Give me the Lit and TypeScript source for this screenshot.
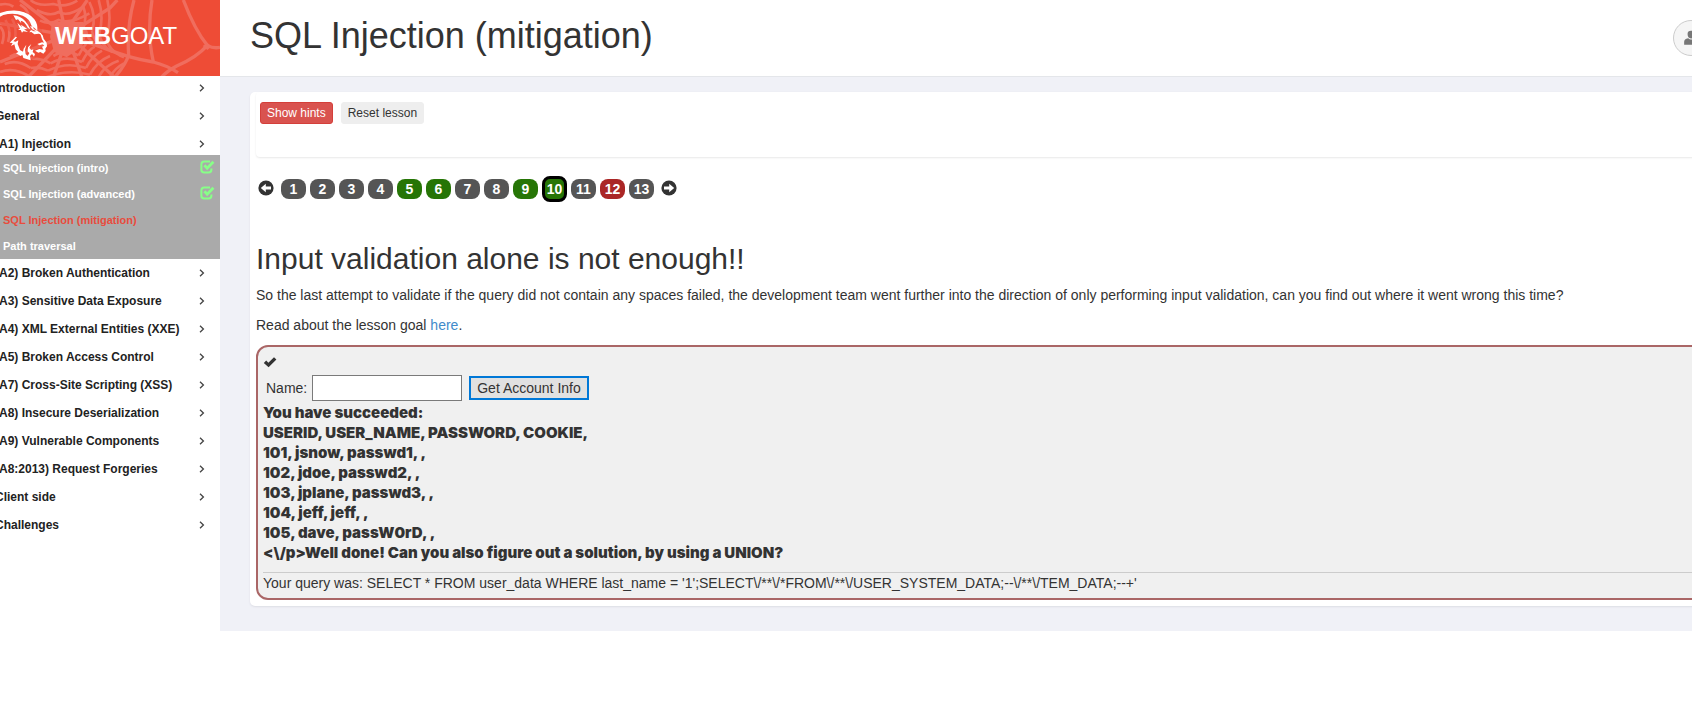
import { LitElement, html, css, svg } from "lit";
import { customElement } from "lit/decorators.js";
import { classMap } from "lit/directives/class-map.js";

interface Lesson {
  name: string;
  solved?: boolean;
  current?: boolean;
}
interface Category {
  name: string;
  lessons?: Lesson[];
}

const CATEGORIES: Category[] = [
  { name: "Introduction" },
  { name: "General" },
  {
    name: "(A1) Injection",
    lessons: [
      { name: "SQL Injection (intro)", solved: true },
      { name: "SQL Injection (advanced)", solved: true },
      { name: "SQL Injection (mitigation)", current: true },
      { name: "Path traversal" },
    ],
  },
  { name: "(A2) Broken Authentication" },
  { name: "(A3) Sensitive Data Exposure" },
  { name: "(A4) XML External Entities (XXE)" },
  { name: "(A5) Broken Access Control" },
  { name: "(A7) Cross-Site Scripting (XSS)" },
  { name: "(A8) Insecure Deserialization" },
  { name: "(A9) Vulnerable Components" },
  { name: "(A8:2013) Request Forgeries" },
  { name: "Client side" },
  { name: "Challenges" },
];

const OUTPUT = [
  "You have succeeded:",
  "USERID, USER_NAME, PASSWORD, COOKIE,",
  "101, jsnow, passwd1, ,",
  "102, jdoe, passwd2, ,",
  "103, jplane, passwd3, ,",
  "104, jeff, jeff, ,",
  "105, dave, passW0rD, ,",
  "<\\/p>Well done! Can you also figure out a solution, by using a UNION?",
];

const QUERY =
  "SELECT * FROM user_data WHERE last_name = '1';SELECT\\/**\\/*FROM\\/**\\/USER_SYSTEM_DATA;--\\/**\\/TEM_DATA;--+'";

/* Spider web rings, drawn as sagging threads between the strands. */
const webRings = [
  "M60 14Q96 34 84 78",
  "M92 0Q112 20 160 12Q196 24 232 2",
  "M110 30Q150 52 176 36Q204 52 250 20",
  "M120 62Q150 76 176 60Q210 74 268 40",
  "M250 20Q262 52 250 82",
  "M268 6Q290 48 276 92",
  "M296 0Q312 52 298 98",
  "M322 0Q336 60 320 112",
  "M258 92Q262 116 280 128",
  "M276 92Q280 124 306 140",
  "M298 98Q300 136 338 156",
  "M320 112Q322 150 372 172",
  "M160 168Q196 146 236 166",
  "M152 190Q198 164 246 186",
  "M144 212Q200 184 258 204",
  "M138 232Q204 206 270 224",
  "M236 166Q250 140 262 128",
  "M246 186Q262 152 284 140",
  "M258 204Q276 168 306 152",
  "M270 224Q290 184 330 168",
  "M296 232Q312 196 356 182",
  "M330 232Q342 206 372 190",
  "M30 170Q60 150 96 176",
  "M14 192Q52 176 92 204",
  "M0 216Q44 200 88 230",
  "M96 176Q128 176 152 190",
  "M92 204Q120 200 144 212",
  "M0 14Q24 8 40 20",
  "M0 80Q18 96 6 132",
  "M16 60Q36 88 24 126",
  "M36 56Q52 84 44 118",
];
const webStrands = [
  "M196 96L176 0",
  "M196 96L262 0",
  "M190 100L60 0",
  "M190 104L0 70",
  "M190 110L0 186",
  "M196 116L84 232",
  "M200 116L160 232",
  "M206 116L246 232",
  "M212 112L344 232",
  "M210 100L330 24L352 0",
  "M206 108L300 140Q390 176 460 186Q500 196 534 218",
  "M402 0Q380 80 386 166Q376 196 344 232",
  "M456 0Q440 96 460 186",
  "M550 0Q584 90 622 136Q640 146 660 142",
  "M622 136Q590 172 530 198Q500 214 484 232",
];

@customElement("app-root")
export class AppRoot extends LitElement {
  static styles = css`
    :host {
      display: block;
      overflow: hidden;
      background: #fff;
      color: #333;
      font: 14px/20px "Liberation Sans", Arial, sans-serif;
    }
    * {
      box-sizing: border-box;
    }
    button,
    input {
      font: inherit;
      color: inherit;
      margin: 0;
    }
    h1,
    h2,
    p,
    ul,
    ol {
      margin: 0;
      padding: 0;
      list-style: none;
    }
    /* The shell runs past both edges of the window. */
    .shell {
      display: grid;
      grid-template-columns: 240px minmax(0, 1fr);
      align-items: start;
      margin: 0 -36px 0 -20px;
    }
    .brand {
      position: relative;
      display: flex;
      align-items: center;
      height: 76px;
      padding: 0 0 4px 75px;
      background: #ee4c36;
      color: #fff;
      font-size: 24px;
      line-height: 28px;
      text-decoration: none;
      overflow: hidden;
    }
    .brand-art {
      position: absolute;
      inset: 0 0 0 20px;
      width: 220px;
      height: 76px;
    }
    .brand-name {
      position: relative;
    }
    .menu-link {
      display: flex;
      align-items: center;
      justify-content: space-between;
      height: 28px;
      padding: 0 15px 4px;
      color: #222;
      font-size: 12px;
      font-weight: 700;
      text-decoration: none;
      white-space: nowrap;
    }
    .submenu {
      margin: -5px 0 2px;
      background: #aaa;
    }
    .sub-link {
      display: flex;
      align-items: center;
      justify-content: space-between;
      height: 26px;
      padding: 0 5px 0 23px;
      color: #fff;
      font-size: 11px;
      font-weight: 700;
      text-decoration: none;
    }
    .sub-link svg {
      margin-bottom: 3px;
    }
    .sub-link.current {
      color: #e84c3d;
    }
    .top {
      display: flex;
      align-items: center;
      justify-content: space-between;
      height: 77px;
      padding: 0 19px 5px 30px;
      border-bottom: 1px solid #e4e6ea;
    }
    h1 {
      font-size: 36px;
      line-height: 40px;
      font-weight: 400;
    }
    .user {
      display: grid;
      place-items: center;
      width: 36px;
      height: 36px;
      margin-top: 5px;
      padding: 0;
      border: 1px solid #ccc;
      border-radius: 50%;
      background: #f5f5f5;
    }
    .content {
      padding: 15px 0 25px 30px;
      background: #f0f1f7;
    }
    .card {
      padding: 0 0 6px 6px;
      border-radius: 5px;
      background: #fff;
      box-shadow: 0 1px 2px #dcdde4;
    }
    .tools {
      display: flex;
      align-items: flex-start;
      gap: 8px;
      height: 65px;
      padding: 10px 4px;
      border-radius: 4px;
      box-shadow: 0 1px 2px #e8e8e8;
    }
    .small {
      height: 22px;
      padding: 0 6px;
      border: 1px solid #eee;
      border-radius: 3px;
      background: #eee;
      font-size: 12px;
      line-height: 18px;
    }
    .small.danger {
      border-color: #d43f3a;
      background: #d9534f;
      color: #fff;
    }
    .pages {
      display: flex;
      align-items: center;
      gap: 4px;
      padding: 19px 2px 40px;
    }
    .arrow {
      display: flex;
      padding: 0 0 3px;
      border: 0;
      background: none;
    }
    .pages li:first-child {
      margin-right: 3px;
    }
    .pages li:last-child {
      margin-left: 3px;
    }
    .page {
      display: block;
      width: 25px;
      height: 20px;
      border-radius: 8px;
      background: #555;
      color: #fff;
      font-weight: 700;
      text-align: center;
      text-decoration: none;
    }
    .page.solved {
      background: #267506;
    }
    .page.failed {
      background: #aa2626;
    }
    .page.current {
      height: 26px;
      border: 3px solid #000;
    }
    h2 {
      margin-bottom: 10px;
      font-size: 30px;
      line-height: 33px;
      font-weight: 400;
    }
    .text {
      margin-bottom: 10px;
    }
    .text a {
      color: #428bca;
      text-decoration: none;
    }
    .attack {
      padding: 5px;
      border: 2px solid #a66;
      border-radius: 12px;
      background: #f0f0f0;
    }
    .mark {
      display: block;
      margin: 3px 0 4px;
    }
    .form {
      display: flex;
      align-items: center;
      padding: 2px 3px;
    }
    .form label {
      margin-right: 5px;
    }
    .form input {
      width: 150px;
      height: 26px;
      margin-right: 7px;
      padding: 1px 4px;
      border: 1px solid #7a7a7a;
      background: #fff;
    }
    .form button {
      height: 24px;
      padding: 0 6px;
      border: 2px solid #0078d7;
      background: #e1e1e1;
    }
    .output {
      padding-bottom: 9px;
      border-bottom: 1px solid #ccc;
      font-family: Inter, "Liberation Sans", sans-serif;
      font-size: 15px;
      font-weight: 900;
    }
  `;

  private art() {
    return html`<svg class="brand-art" viewBox="0 0 660 228" aria-hidden="true">
      <g fill="none" stroke="#f06d5e" stroke-width="8">
        ${webRings.map((d) => svg`<path d=${d} />`)}
        <g stroke-width="10">${webStrands.map((d) => svg`<path d=${d} />`)}</g>
      </g>
      <path fill="#f06d5e" d="M156 66L250 66L262 96L246 140L200 172L162 156L150 110Z" />
      <path fill="#f06d5e" d="M608 138L622 128L634 140L622 150Z" />
      <path fill="#ee4c36" opacity=".4" d="M0 40Q50 20 92 42Q124 64 126 92L142 130L132 160L92 182L30 150L40 104L0 70Z" />
      <g fill="#fff">
        <path d="M0 39Q30 29 58 33Q88 38 103 58Q114 73 112 92L104 84Q97 84 94 76Q89 56 68 47Q48 39 24 42Q8 44 0 50Z" />
        <path d="M40 46Q61 47 76 64Q86 76 91 88L84 84Q72 62 62 62L64 70L54 58L48 60Z" />
        <path d="M52 68L66 82L63 74L82 87L72 88L84 96L70 94L66 98L62 90L54 90L60 86Z" />
        <path d="M90 78L98 80L102 88L112 92L122 99L126 104L116 101L103 103L94 96L88 97L93 90L101 94L108 94L97 88Z" />
        <path d="M120 99L128 106L131 116L140 128L141 139L136 146L137 153L130 161L121 156L115 158L105 152L118 147L130 149L126 140L133 137L128 133L118 136L112 132L126 127L132 128L126 118L123 108Z" />
        <path d="M47 110L29 128L38 129L33 138L43 133L47 148L55 156L48 160L62 168L67 164L70 174L92 181L90 168L96 162L102 170L105 162L98 156L100 148L94 150L88 144L94 132L84 142L83 154L88 159L83 168L77 163L75 150L79 134L71 146L69 155L60 150L53 132L55 121L47 125L40 124L51 112Z" />
      </g>
    </svg>`;
  }

  private circleArrow(flip: boolean) {
    return html`<svg width="16" height="16" viewBox="0 0 16 16" aria-hidden="true">
      <g transform=${flip ? "translate(16 0) scale(-1 1)" : ""}>
        <circle cx="8" cy="8" r="7.6" fill="#333" />
        <path fill="#fff" d="M2.8 8L7.8 3.8V6.5H13V9.5H7.8V12.2Z" />
      </g>
    </svg>`;
  }

  private solvedIcon() {
    return html`<svg width="15" height="14" viewBox="0 0 15 14" role="img" aria-label="solved">
      <path fill="none" stroke="#8f8" stroke-width="2" d="M10 1.6H4.2Q1.4 1.6 1.4 4.4V9.8Q1.4 12.6 4.2 12.6H8.6Q11.4 12.6 11.4 9.8V8.6" />
      <path fill="none" stroke="#8f8" stroke-width="2.8" d="M4.4 5.2L7.2 8.2L13.4 1.8" />
    </svg>`;
  }

  private menuItem(c: Category) {
    return html`<li>
      <a class="menu-link" href="#">
        <span>${c.name}</span>
        <svg width="6" height="8" viewBox="0 0 6 8" aria-hidden="true">
          <path fill="none" stroke="#444" stroke-width="1.3" d="M1 .8L4.4 4L1 7.2" />
        </svg>
      </a>
      ${c.lessons
        ? html`<ul class="submenu">
            ${c.lessons.map(
              (l) => html`<li>
                <a class=${classMap({ "sub-link": true, current: !!l.current })} href="#">
                  <span>${l.name}</span>${l.solved ? this.solvedIcon() : ""}
                </a>
              </li>`
            )}
          </ul>`
        : ""}
    </li>`;
  }

  private pageLink(n: number) {
    const cls = {
      page: true,
      solved: [5, 6, 9, 10].includes(n),
      failed: n === 12,
      current: n === 10,
    };
    return html`<li><a class=${classMap(cls)} href="#">${n}</a></li>`;
  }

  render() {
    const pages = Array.from({ length: 13 }, (_, i) => i + 1);
    return html`<div class="shell">
      <aside>
        <a class="brand" href="#">${this.art()}<span class="brand-name"><b>WEB</b>GOAT</span></a>
        <nav><ul>${CATEGORIES.map((c) => this.menuItem(c))}</ul></nav>
      </aside>
      <div>
        <header class="top">
          <h1>SQL Injection (mitigation)</h1>
          <button class="user" aria-label="User">
            <svg width="16" height="16" viewBox="0 0 14 14" aria-hidden="true">
              <path fill="#777" d="M4 3.4Q4 .6 7 .6T10 3.4Q10 7 7 7.4Q4 7 4 3.4ZM1 13V10.4Q1 8 3.6 7.4L4.6 7.2Q7 9.6 9.4 7.2L10.4 7.4Q13 8 13 10.4V13Z" />
            </svg>
          </button>
        </header>
        <main class="content">
          <div class="card">
            <div class="tools">
              <button class="small danger">Show hints</button>
              <button class="small">Reset lesson</button>
            </div>
            <ol class="pages">
              <li><button class="arrow" aria-label="Previous page">${this.circleArrow(false)}</button></li>
              ${pages.map((n) => this.pageLink(n))}
              <li><button class="arrow" aria-label="Next page">${this.circleArrow(true)}</button></li>
            </ol>
            <h2>Input validation alone is not enough!!</h2>
            <p class="text">
              So the last attempt to validate if the query did not contain any spaces failed, the development team went
              further into the direction of only performing input validation, can you find out where it went wrong this
              time?
            </p>
            <p class="text">Read about the lesson goal <a href="#">here</a>.</p>
            <section class="attack">
              <svg class="mark" width="14" height="14" viewBox="0 0 14 14" role="img" aria-label="Assignment solved">
                <path fill="#333" d="M.8 8L3.2 5.6L5.4 7.8L11 2.2L13.4 4.4L5.6 12.2Z" />
              </svg>
              <form class="form">
                <label for="account">Name:</label>
                <input id="account" type="text" />
                <button type="button">Get Account Info</button>
              </form>
              <div class="output">${OUTPUT.map((line) => html`<div>${line}</div>`)}</div>
              <div>Your query was: ${QUERY}</div>
            </section>
          </div>
        </main>
      </div>
    </div>`;
  }
}
